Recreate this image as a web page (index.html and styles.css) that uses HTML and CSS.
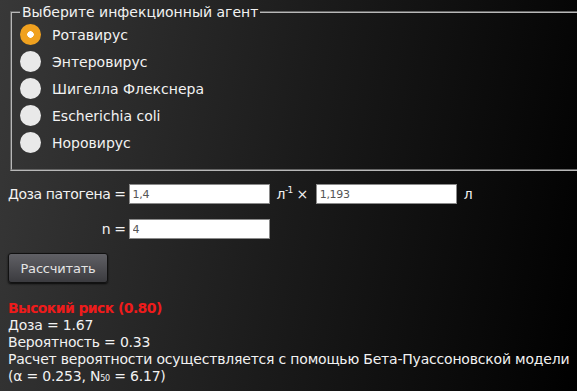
FILE: index.html
```html
<!DOCTYPE html>
<html>
<head>
    <title>Оценка риска</title>
    <link rel="stylesheet" href="styles.css">
</head>
<body>
    <fieldset class="agents">
        <legend>Выберите инфекционный агент</legend>
        <label class="agent"><input type="radio" name="agent" value="rota" checked><span>Ротавирус</span></label>
        <label class="agent"><input type="radio" name="agent" value="entero"><span>Энтеровирус</span></label>
        <label class="agent"><input type="radio" name="agent" value="shigella"><span>Шигелла Флекснера</span></label>
        <label class="agent"><input type="radio" name="agent" value="ecoli"><span>Escherichia coli</span></label>
        <label class="agent"><input type="radio" name="agent" value="noro"><span>Норовирус</span></label>
    </fieldset>

    <div class="dose-form">
        <span class="field-label">Доза патогена =</span>
        <input type="text" class="field" value="1,4">
        <span class="unit">л<sup>-1</sup> ×</span>
        <input type="text" class="field" value="1,193">
        <span class="unit">л</span>

        <span class="field-label">n =</span>
        <input type="text" class="field" value="4">
    </div>

    <button class="calc-button">Рассчитать</button>

    <div class="result">
        <div class="risk">Высокий риск (0.80)</div>
        <div>Доза = 1.67</div>
        <div>Вероятность = 0.33</div>
        <div class="model">Расчет вероятности осуществляется с помощью Бета-Пуассоновской модели</div>
        <div>(α = 0.253, N<sub>50</sub> = 6.17)</div>
    </div>
</body>
</html>
```

FILE: styles.css
```css
html {
    overflow: hidden;
    height: 100%;
}

body {
    font-family: 'DejaVu Sans', sans-serif;
    margin: 0;
    padding: 4px 8px 0 8px;
    min-height: 100%;
    box-sizing: border-box;
    color: #f2f2f2;
    background: linear-gradient(100deg, #383838 0%, #1b1b1b 50%, #000 100%);
    font-size: 14px;
    letter-spacing: -0.2px;
}

.agents {
    width: 600px;
    margin: 0 2px;
    padding: 1px 8px 13px 8px;
    border: 2px groove #b8b8b8;
}

.agents legend {
    font-size: 14px;
    letter-spacing: 0;
    padding: 0 2px;
    color: #f2f2f2;
}

.agent {
    display: flex;
    align-items: center;
    height: 27px;
    font-size: 14px;
    letter-spacing: 0;
    cursor: pointer;
}

.agent input {
    appearance: none;
    -webkit-appearance: none;
    width: 21px;
    height: 21px;
    margin: 0 11px 0 0;
    border-radius: 50%;
    background-color: #e9e9e9;
    flex-shrink: 0;
}

.agent input:checked {
    background: radial-gradient(circle, #fff 0 3px, #f0a11f 3.5px);
}

.dose-form {
    display: grid;
    grid-template-columns: auto 141px auto 141px auto;
    align-items: center;
    row-gap: 15px;
    margin-top: 13px;
    width: max-content;
}

.field-label {
    justify-self: end;
    padding-right: 3px;
    letter-spacing: -0.45px;
}

.field {
    box-sizing: border-box;
    height: 20px;
    width: 141px;
    margin: 0;
    padding: 0 3px;
    border: 1px solid #8a8a8a;
    background: #fff;
    color: #555;
    font-family: 'DejaVu Sans', sans-serif;
    font-size: 11px;
    letter-spacing: -0.3px;
}

.unit {
    padding: 0 8px 0 7px;
    letter-spacing: -0.6px;
}

.unit sup {
    font-size: 9px;
    line-height: 0;
}

.calc-button {
    display: block;
    margin-top: 14px;
    width: 100px;
    height: 30px;
    border: 1px solid #111;
    border-radius: 3px;
    background: linear-gradient(#606065, #3b3b3f);
    box-shadow: 0 1px 2px rgba(0, 0, 0, 0.8);
    color: #e4e4e4;
    font-family: 'DejaVu Sans', sans-serif;
    font-size: 13px;
    letter-spacing: -0.2px;
    cursor: pointer;
}

.result {
    margin-top: 17px;
    line-height: 17px;
}

.risk {
    color: #ee1b1b;
    font-weight: bold;
    letter-spacing: -0.6px;
}

.model {
    white-space: nowrap;
}

.result sub {
    font-size: 8px;
    line-height: 0;
    vertical-align: baseline;
}
```
